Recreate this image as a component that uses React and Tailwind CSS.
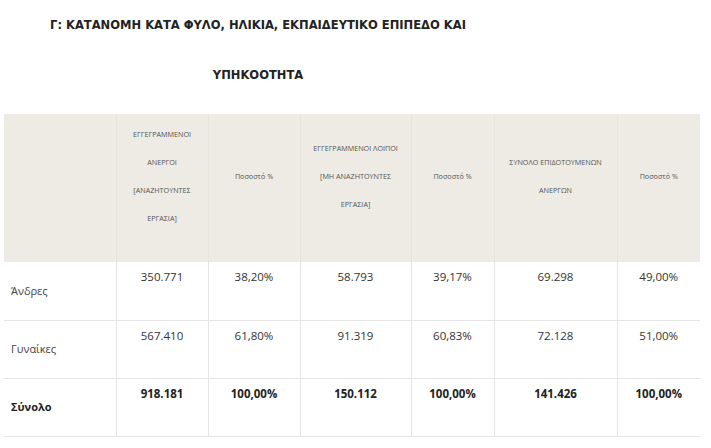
import React from "react";

const headers = [
  null,
  ["ΕΓΓΕΓΡΑΜΜΕΝΟΙ", "ΑΝΕΡΓΟΙ", "[ΑΝΑΖΗΤΟΥΝΤΕΣ", "ΕΡΓΑΣΙΑ]"],
  ["Ποσοστό %"],
  ["ΕΓΓΕΓΡΑΜΜΕΝΟΙ ΛΟΙΠΟΙ", "[ΜΗ ΑΝΑΖΗΤΟΥΝΤΕΣ", "ΕΡΓΑΣΙΑ]"],
  ["Ποσοστό %"],
  ["ΣΥΝΟΛΟ ΕΠΙΔΟΤΟΥΜΕΝΩΝ", "ΑΝΕΡΓΩΝ"],
  ["Ποσοστό %"],
];

const rows = [
  ["Άνδρες", "350.771", "38,20%", "58.793", "39,17%", "69.298", "49,00%"],
  ["Γυναίκες", "567.410", "61,80%", "91.319", "60,83%", "72.128", "51,00%"],
  ["Σύνολο", "918.181", "100,00%", "150.112", "100,00%", "141.426", "100,00%"],
];

const widths = [112, 92, 92, 111, 83, 123, 83];

export default function App() {
  return (
    <div className="w-[711px] h-[448px] bg-white overflow-hidden" style={{ fontFamily: '"Open Sans", "Noto Sans", sans-serif' }}>
      <h3
        className="w-[516px] text-center font-bold text-[12.8px] leading-[50px] text-[#222] mb-[14px]"
        style={{ fontFamily: '"DejaVu Sans Condensed", "DejaVu Sans", sans-serif' }}
      >
        Γ: ΚΑΤΑΝΟΜΗ ΚΑΤΑ ΦΥΛΟ, ΗΛΙΚΙΑ, ΕΚΠΑΙΔΕΥΤΙΚΟ ΕΠΙΠΕΔΟ ΚΑΙ
        <br />
        ΥΠΗΚΟΟΤΗΤΑ
      </h3>
      <table className="ml-[4px] w-[696px] border-collapse table-fixed">
        <colgroup>
          {widths.map((w, i) => (
            <col key={i} style={{ width: w }} />
          ))}
        </colgroup>
        <thead>
          <tr className="bg-[#edebe3]">
            {headers.map((h, i) => (
              <th
                key={i}
                className="h-[148px] px-[4px] py-[6px] align-middle text-center font-normal text-[7.2px] text-[#555] border-r border-[#e6e4dc] last:border-r-0"
              >
                {h && (
                  <div className="mb-[24px]">
                    {h.map((line, j) => (
                      <div key={j} className="leading-[28px] whitespace-nowrap">
                        {line}
                      </div>
                    ))}
                  </div>
                )}
              </th>
            ))}
          </tr>
        </thead>
        <tbody>
          {rows.map((r, ri) => (
            <tr key={ri} className="border-b border-[#e5e5e5]">
              {r.map((c, ci) =>
                ci === 0 ? (
                  <td
                    key={ci}
                    className={`h-[58px] pl-[7px] align-middle text-[11px] border-r border-[#e5e5e5] ${
                      ri === 2 ? "font-bold text-[#222]" : "text-[#444]"
                    }`}
                  >
                    {c}
                  </td>
                ) : (
                  <td
                    key={ci}
                    className={`h-[58px] pt-[1px] align-top text-center text-[11.5px] ${
                      ci < 6 ? "border-r border-[#e5e5e5]" : ""
                    } ${ri === 2 ? "font-bold text-[#222]" : "text-[#333]"}`}
                  >
                    <div className="leading-[28px]">{c}</div>
                  </td>
                )
              )}
            </tr>
          ))}
        </tbody>
      </table>
    </div>
  );
}
